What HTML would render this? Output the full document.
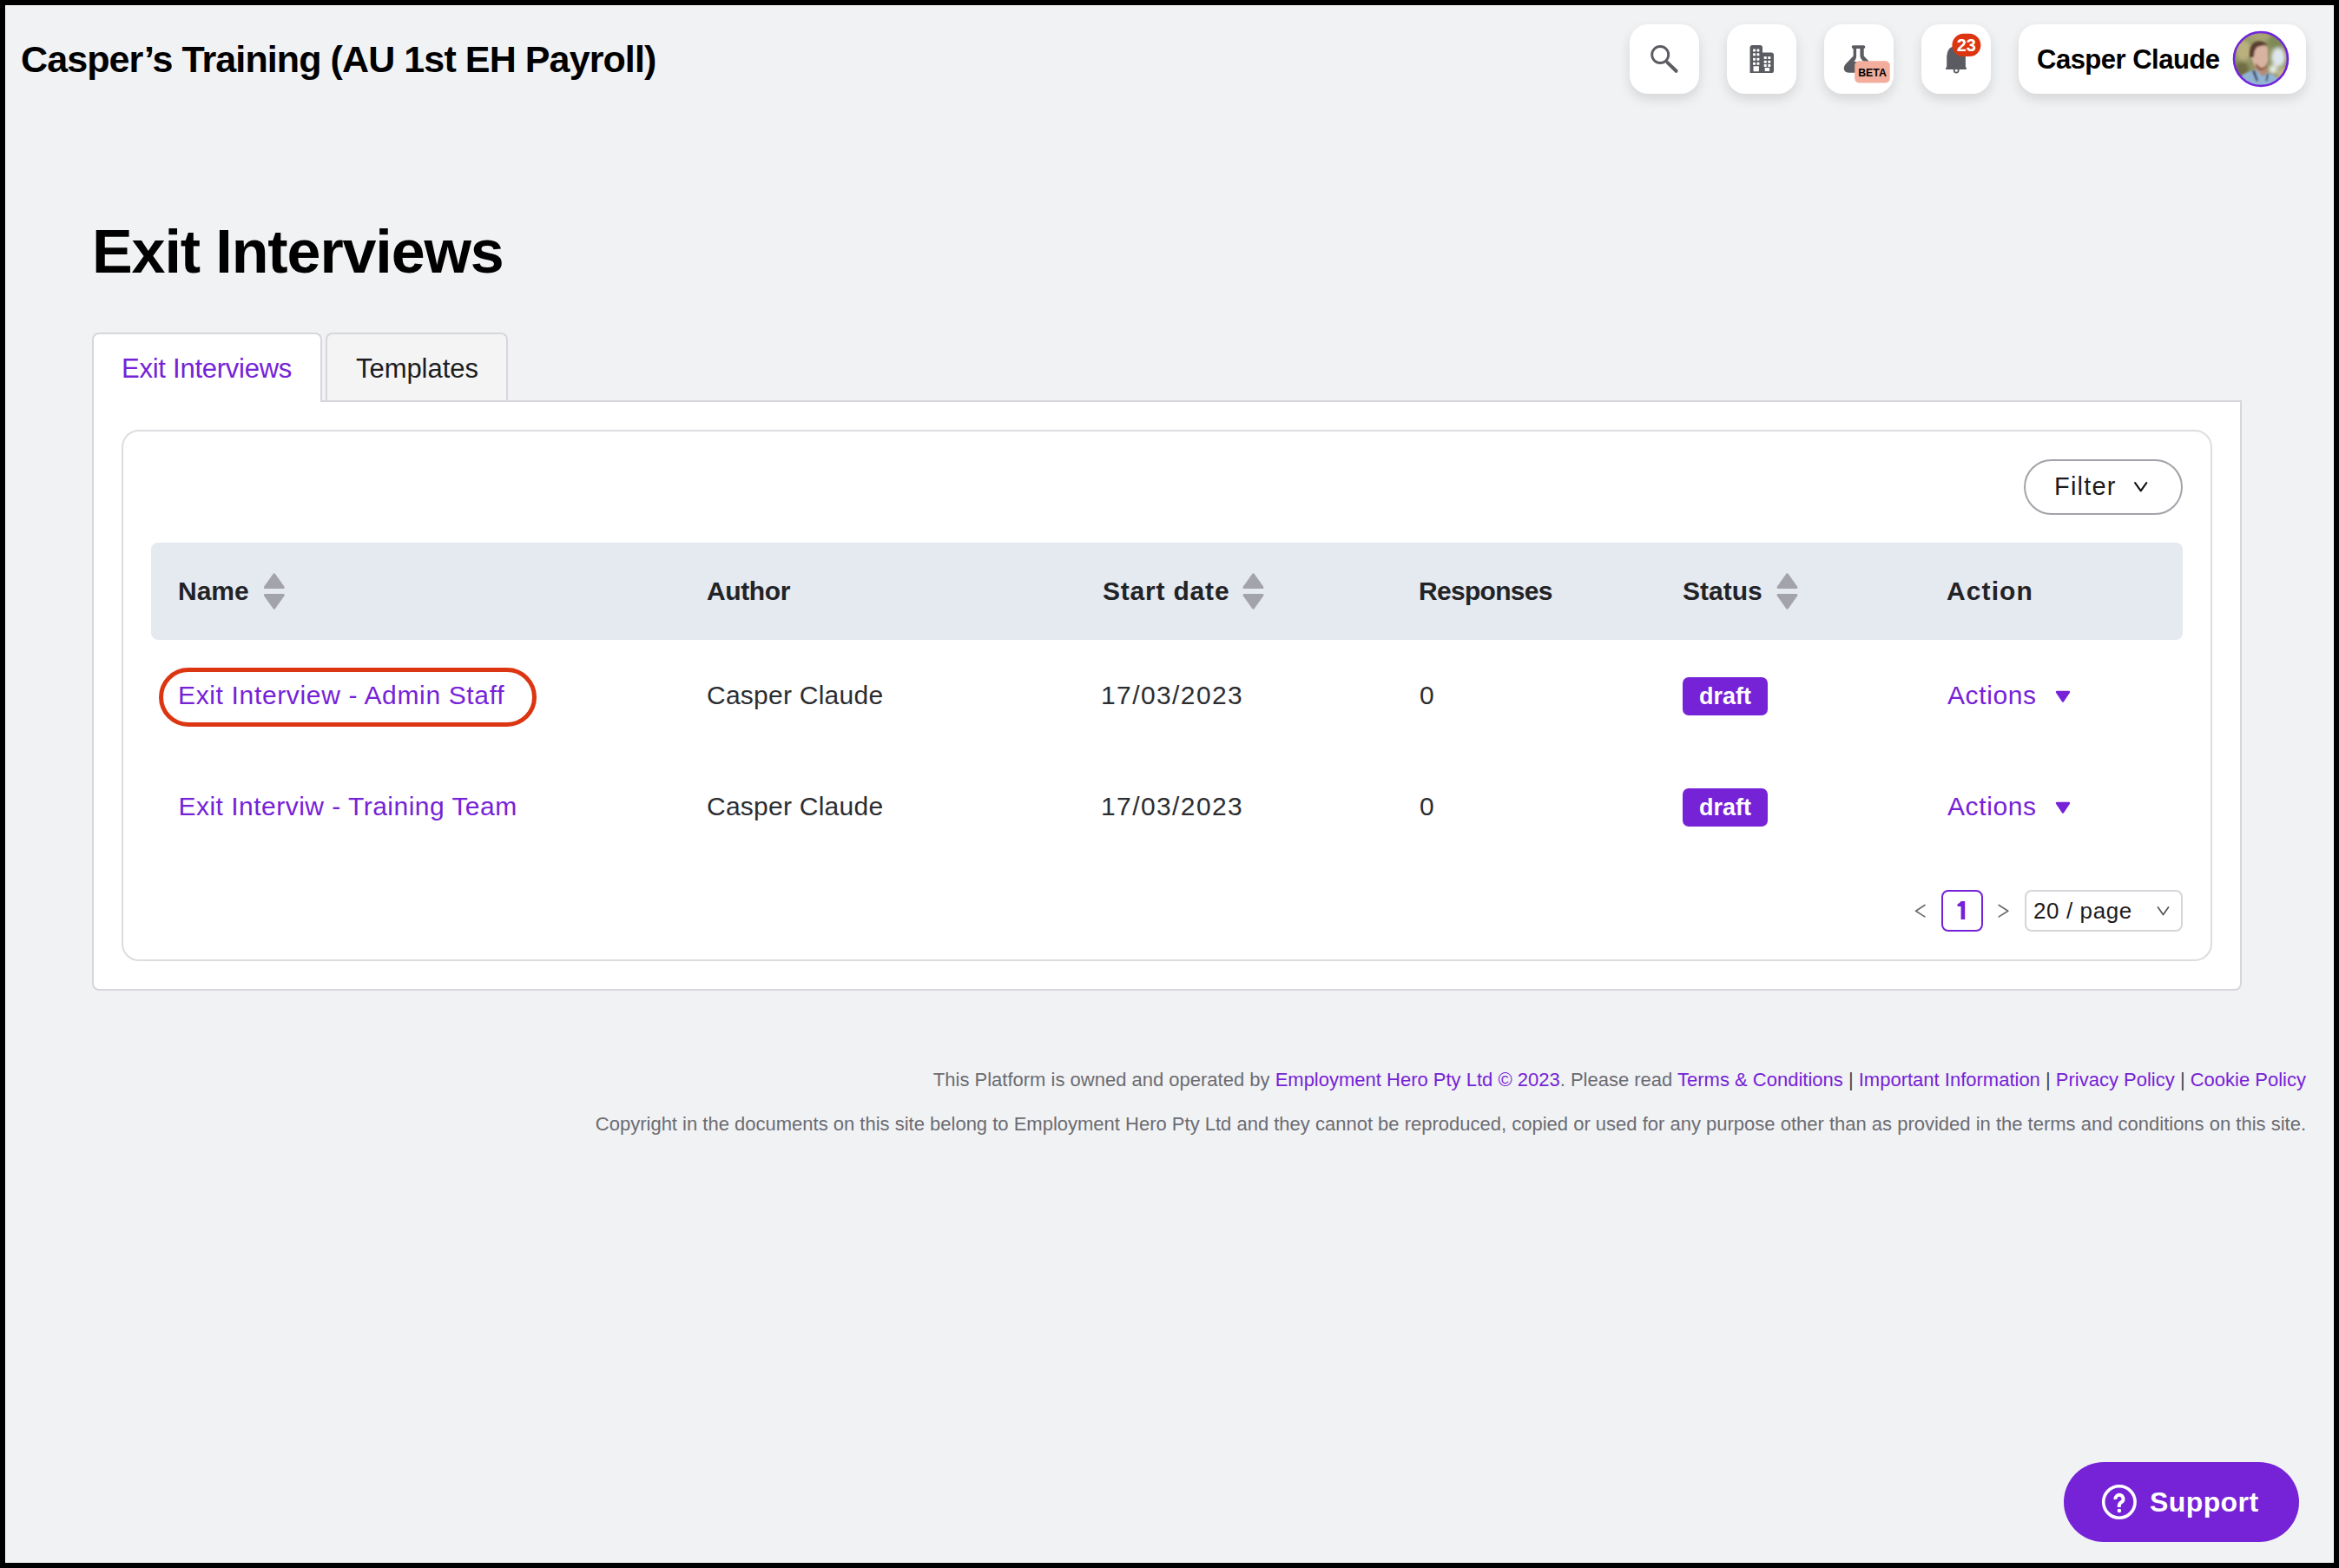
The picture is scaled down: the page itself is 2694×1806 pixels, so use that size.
<!DOCTYPE html>
<html>
<head>
<meta charset="utf-8">
<style>
*{box-sizing:border-box;margin:0;padding:0}
html,body{width:2694px;height:1806px;overflow:hidden;background:#000}
body{font-family:"Liberation Sans",sans-serif;position:relative}
#bg{position:absolute;left:6px;top:6px;width:2682px;height:1794px;background:#f1f2f4;border:1px solid #fff}
.t{position:absolute;white-space:nowrap;line-height:1}
.btn{position:absolute;top:28px;width:80px;height:80px;background:#fff;border-radius:21px;box-shadow:0 6px 14px rgba(0,0,0,0.12)}
.box{position:absolute}
svg{position:absolute;overflow:visible}
.hd{font-size:30px;font-weight:700;color:#222327}
.cell{font-size:30px;color:#2c2d31}
.badge{position:absolute;width:98px;height:44px;background:#7622d7;border-radius:7px;color:#fff;font-weight:700;font-size:27px;text-align:center;line-height:44px}
.foot{font-size:22px;color:#6b6c72}
.p{color:#7622d7}
.sep{color:#45464b}
</style>
</head>
<body>
<div id="bg"></div>

<!-- Top bar -->
<div class="t" style="left:24px;top:47px;font-size:43px;font-weight:700;color:#000;letter-spacing:-0.9px">Casper&#8217;s Training (AU 1st EH Payroll)</div>

<div class="btn" style="left:1877px"></div>
<div class="btn" style="left:1989px"></div>
<div class="btn" style="left:2101px"></div>
<div class="btn" style="left:2213px"></div>
<div class="btn" style="left:2325px;width:331px"></div>

<!-- search icon -->
<svg style="left:0;top:0" width="2694" height="120" viewBox="0 0 2694 120">
  <g fill="none" stroke="#5b5c61" stroke-linecap="round">
    <circle cx="1912.2" cy="63" r="9.5" stroke-width="2.9"/>
    <line x1="1920.6" y1="72.1" x2="1930.6" y2="81.8" stroke-width="4"/>
  </g>
  <!-- building -->
  <g fill="#5b5c61">
    <path d="M2015.5,84 V55 Q2015.5,52 2018.5,52 H2027 Q2030,52 2030,55 V84 Z"/>
    <path d="M2029,84 V60.5 H2040 Q2043,60.5 2043,63.5 V82 Q2043,84 2041,84 Z"/>
  </g>
  <g fill="#fff">
    <rect x="2019" y="56.4" width="3" height="3" rx="0.6"/><rect x="2023.4" y="56.4" width="3" height="3" rx="0.6"/>
    <rect x="2019" y="61.3" width="3" height="3" rx="0.6"/><rect x="2023.4" y="61.3" width="3" height="3" rx="0.6"/>
    <rect x="2019" y="66.7" width="3" height="3" rx="0.6"/><rect x="2023.4" y="66.7" width="3" height="3" rx="0.6"/>
    <rect x="2019" y="71.8" width="3" height="3" rx="0.6"/><rect x="2023.4" y="71.8" width="3" height="3" rx="0.6"/>
    <rect x="2019.5" y="76.2" width="6.4" height="6" rx="0.4"/>
    <rect x="2031.7" y="65" width="3" height="3" rx="0.6"/><rect x="2036.3" y="65" width="3" height="3" rx="0.6"/>
    <rect x="2031.7" y="69.7" width="3" height="3" rx="0.6"/><rect x="2036.3" y="69.7" width="3" height="3" rx="0.6"/>
    <rect x="2031.7" y="73.9" width="3" height="3" rx="0.6"/><rect x="2036.3" y="73.9" width="3" height="3" rx="0.6"/>
    <rect x="2032.7" y="78" width="5.4" height="4.1" rx="0.4"/>
  </g>
  <!-- flask -->
  <g fill="#5b5c61">
    <rect x="2132.7" y="52.2" width="15.6" height="3.8" rx="1.9"/>
    <path d="M2134.6,55 H2146.7 V64.6 L2155.5,73.5 Q2159,77.5 2157,81 Q2155.5,83.8 2151,83.8 H2130 Q2125.5,83.8 2124,80.5 Q2123,77 2126,73.5 L2134.6,64.6 Z"/>
  </g>
  <path fill="#fff" d="M2138.1,56 H2142.4 V64.8 Q2142.6,67 2144.5,69 L2146.5,71 H2135.2 L2136.6,69.4 Q2138.1,67.5 2138.1,64.8 Z"/>
  <rect x="2136.2" y="70.3" width="40.5" height="25.2" rx="5" fill="#f2ad9c"/>
  <text x="2156.5" y="87.8" text-anchor="middle" font-family="Liberation Sans" font-weight="700" font-size="12.3" fill="#000">BETA</text>
  <!-- bell -->
  <g fill="#5b5c61">
    <path d="M2242.2,78 V67 Q2242.2,53 2253,53 Q2263.9,53 2263.9,67 V78 Z"/>
    <rect x="2241" y="77.5" width="24" height="2.5" rx="1"/>
    <circle cx="2253.2" cy="81" r="3.4"/>
  </g>
  <circle cx="2253.2" cy="81.2" r="1.5" fill="#fff"/>
  <rect x="2248.4" y="38.8" width="33" height="26.2" rx="13.1" fill="#dc3510"/>
  <text x="2264.8" y="59" text-anchor="middle" font-family="Liberation Sans" font-weight="700" font-size="20" fill="#fff">23</text>
</svg>

<div class="t" style="left:2346px;top:53px;font-size:31px;font-weight:700;color:#000;letter-spacing:-0.5px">Casper Claude</div>

<!-- avatar -->
<svg style="left:2572px;top:36px" width="64" height="64" viewBox="0 0 64 64">
  <defs>
    <clipPath id="av"><circle cx="32" cy="32" r="31"/></clipPath>
    <filter id="bl" x="-30%" y="-30%" width="160%" height="160%"><feGaussianBlur stdDeviation="2.2"/></filter>
    <filter id="bl2" x="-30%" y="-30%" width="160%" height="160%"><feGaussianBlur stdDeviation="1"/></filter>
  </defs>
  <g clip-path="url(#av)">
    <rect width="64" height="64" fill="#8f9462"/>
    <g filter="url(#bl)">
      <ellipse cx="12" cy="22" rx="9" ry="12" fill="#b9b07e"/>
      <ellipse cx="30" cy="6" rx="14" ry="6" fill="#a7a473"/>
      <ellipse cx="50" cy="12" rx="10" ry="8" fill="#7d8a55"/>
      <ellipse cx="52" cy="30" rx="8" ry="11" fill="#dfe7ee"/>
      <ellipse cx="46" cy="44" rx="5" ry="5" fill="#e6ebe6"/>
      <ellipse cx="58" cy="50" rx="7" ry="8" fill="#c8b98a"/>
      <ellipse cx="10" cy="44" rx="8" ry="9" fill="#6f6c45"/>
    </g>
    <g filter="url(#bl2)">
      <path d="M24,38 Q24,48 30,50 L38,50 Q40,46 39,38 Z" fill="#b98b74"/>
      <path d="M21,24 Q21,14 30,14 Q39,14 40,22 L40,34 Q39,42 32,42 Q26,42 23,36 Q21,32 21,26 Z" fill="#d8b3a2"/>
      <path d="M27,37 Q30,42 34,42 Q38,41 39,36 L39,40 Q37,45 32,45 Q27,44 26,39 Z" fill="#8a5e48"/>
      <path d="M19,30 Q18,16 26,12 Q34,10 40,16 Q34,16 28,18 Q24,21 24,30 Z" fill="#5a3d2e"/>
      <path d="M2,64 Q6,50 20,46 L26,44 L34,52 L40,48 Q54,52 60,64 Z" fill="#93b3d3"/>
      <path d="M22,46 L25,45 L29,57 L27,58 Z" fill="#34405a"/>
      <path d="M39,49 L41,50 L39,58 L37.5,57 Z" fill="#34405a"/>
    </g>
  </g>
  <circle cx="32" cy="32" r="31" fill="none" stroke="#7125dc" stroke-width="2.6"/>
</svg>

<!-- Heading -->
<div class="t" style="left:106px;top:255px;font-size:70px;font-weight:700;color:#000;letter-spacing:-1.1px">Exit Interviews</div>

<!-- Tabs + panel -->
<div class="box" style="left:106px;top:461px;width:2476px;height:680px;background:#fff;border:2px solid #d6d7dc;border-radius:0 0 8px 8px"></div>
<div class="box" style="left:375px;top:383px;width:210px;height:78px;background:#f4f4f5;border:2px solid #d6d7dc;border-bottom:none;border-radius:8px 8px 0 0"></div>
<div class="box" style="left:106px;top:383px;width:265px;height:80px;background:#fff;border:2px solid #d6d7dc;border-bottom:none;border-radius:8px 8px 0 0"></div>
<div class="t p" style="left:140px;top:409px;font-size:31px;letter-spacing:-0.25px">Exit Interviews</div>
<div class="t" style="left:410px;top:409px;font-size:31px;color:#1c1c1e;letter-spacing:-0.05px">Templates</div>

<!-- Card -->
<div class="box" style="left:140px;top:495px;width:2408px;height:612px;border:2px solid #dcdde1;border-radius:20px"></div>

<!-- Filter -->
<div class="box" style="left:2331px;top:529px;width:183px;height:64px;border:2px solid #a2a3a9;border-radius:32px"></div>
<div class="t" style="left:2366px;top:546px;font-size:29px;color:#1c1c1e;letter-spacing:1.2px">Filter</div>
<svg style="left:0;top:0" width="1" height="1"><polyline points="2459.1,556.2 2465.7,565.3 2472.3,556.2" fill="none" stroke="#111" stroke-width="2.1" stroke-linecap="round" stroke-linejoin="round"/></svg>

<!-- Table header -->
<div class="box" style="left:174px;top:625px;width:2340px;height:112px;background:#e5e9f0;border-radius:8px"></div>
<div class="t hd" style="left:205px;top:666px">Name</div>
<div class="t hd" style="left:814px;top:666px;letter-spacing:-0.4px">Author</div>
<div class="t hd" style="left:1270px;top:666px;letter-spacing:0.8px">Start date</div>
<div class="t hd" style="left:1634px;top:666px;letter-spacing:-0.7px">Responses</div>
<div class="t hd" style="left:1938px;top:666px">Status</div>
<div class="t hd" style="left:2242px;top:666px;letter-spacing:1.1px">Action</div>
<svg style="left:0;top:0" width="1" height="1">
  <defs>
    <g id="sort" fill="#a3a4a9" stroke="#a3a4a9" stroke-width="3" stroke-linejoin="round">
      <polygon points="12,1.8 22.5,16.5 1.5,16.5"/>
      <polygon points="1.5,25.5 22.5,25.5 12,40.2"/>
    </g>
  </defs>
  <use href="#sort" x="303.8" y="660"/>
  <use href="#sort" x="1431.5" y="660"/>
  <use href="#sort" x="2046.5" y="660"/>
</svg>

<!-- Rows -->
<div class="box" style="left:183px;top:769px;width:435px;height:68px;border:5px solid #dc3511;border-radius:34px"></div>
<div class="t cell p" style="left:205px;top:786px;letter-spacing:0.65px">Exit Interview - Admin Staff</div>
<div class="t cell" style="left:814px;top:786px;letter-spacing:0.25px">Casper Claude</div>
<div class="t cell" style="left:1268px;top:786px;letter-spacing:1.4px">17/03/2023</div>
<div class="t cell" style="left:1635px;top:786px">0</div>
<div class="badge" style="left:1938px;top:780px">draft</div>
<div class="t cell p" style="left:2243px;top:786px;letter-spacing:0.6px">Actions</div>

<div class="t cell p" style="left:205.5px;top:914px;letter-spacing:0.48px">Exit Interviw - Training Team</div>
<div class="t cell" style="left:814px;top:914px;letter-spacing:0.25px">Casper Claude</div>
<div class="t cell" style="left:1268px;top:914px;letter-spacing:1.4px">17/03/2023</div>
<div class="t cell" style="left:1635px;top:914px">0</div>
<div class="badge" style="left:1938px;top:908px">draft</div>
<div class="t cell p" style="left:2243px;top:914px;letter-spacing:0.6px">Actions</div>
<svg style="left:0;top:0" width="1" height="1">
  <g fill="#7622d7" stroke="#7622d7" stroke-width="2.4" stroke-linejoin="round">
    <polygon points="2369,797 2383,797 2376,807.5"/>
    <polygon points="2369,925 2383,925 2376,935.5"/>
  </g>
</svg>

<!-- Pagination -->
<svg style="left:0;top:0" width="1" height="1">
  <g fill="none" stroke="#6a6b70" stroke-width="1.7" stroke-linecap="round" stroke-linejoin="round">
    <polyline points="2216.9,1042.5 2206.6,1049.2 2216.9,1055.9"/>
    <polyline points="2302.2,1042.5 2312.8,1049.2 2302.2,1055.9"/>
    <polyline points="2485.5,1045 2491.5,1053.5 2497.5,1045" stroke="#55565b"/>
  </g>
</svg>
<div class="box" style="left:2236px;top:1025px;width:48px;height:48px;border:2px solid #7622d7;border-radius:8px"></div>
<svg style="left:0;top:0" width="1" height="1"><path fill="#7622d7" d="M2258.6,1038 H2263.2 V1059 H2258.6 V1044 H2254.6 V1041.2 Q2257.4,1040.4 2258.6,1038 Z"/></svg>
<div class="box" style="left:2332px;top:1025px;width:182px;height:48px;border:2px solid #d5d6da;border-radius:8px"></div>
<div class="t" style="left:2342px;top:1036px;font-size:26px;color:#1c1c1e;letter-spacing:0.6px">20 / page</div>

<!-- Footer -->
<div class="t foot" style="right:38px;top:1233px">This Platform is owned and operated by <span class="p">Employment Hero Pty Ltd &#169; 2023</span>. Please read <span class="p">Terms &amp; Conditions</span> <span class="sep">|</span> <span class="p">Important Information</span> <span class="sep">|</span> <span class="p">Privacy Policy</span> <span class="sep">|</span> <span class="p">Cookie Policy</span></div>
<div class="t foot" style="right:38px;top:1283.5px">Copyright in the documents on this site belong to Employment Hero Pty Ltd and they cannot be reproduced, copied or used for any purpose other than as provided in the terms and conditions on this site.</div>

<!-- Support -->
<div class="box" style="left:2377px;top:1684px;width:271px;height:92px;background:#7622d7;border-radius:46px"></div>
<svg style="left:0;top:0" width="1" height="1">
  <circle cx="2440.9" cy="1730" r="18.2" fill="none" stroke="#fff" stroke-width="3.6"/>
</svg>
<svg style="left:0;top:0" width="1" height="1"><path fill="none" stroke="#fff" stroke-width="4" d="M2436.4,1727 A4.6,4.6 0 1 1 2444.6,1729.3 Q2440.8,1731.5 2440.8,1734 V1735.9"/><circle cx="2440.9" cy="1740" r="2.3" fill="#fff"/></svg>
<div class="t" style="left:2476px;top:1714px;font-size:32px;font-weight:700;color:#fff;letter-spacing:0.4px">Support</div>

</body>
</html>
